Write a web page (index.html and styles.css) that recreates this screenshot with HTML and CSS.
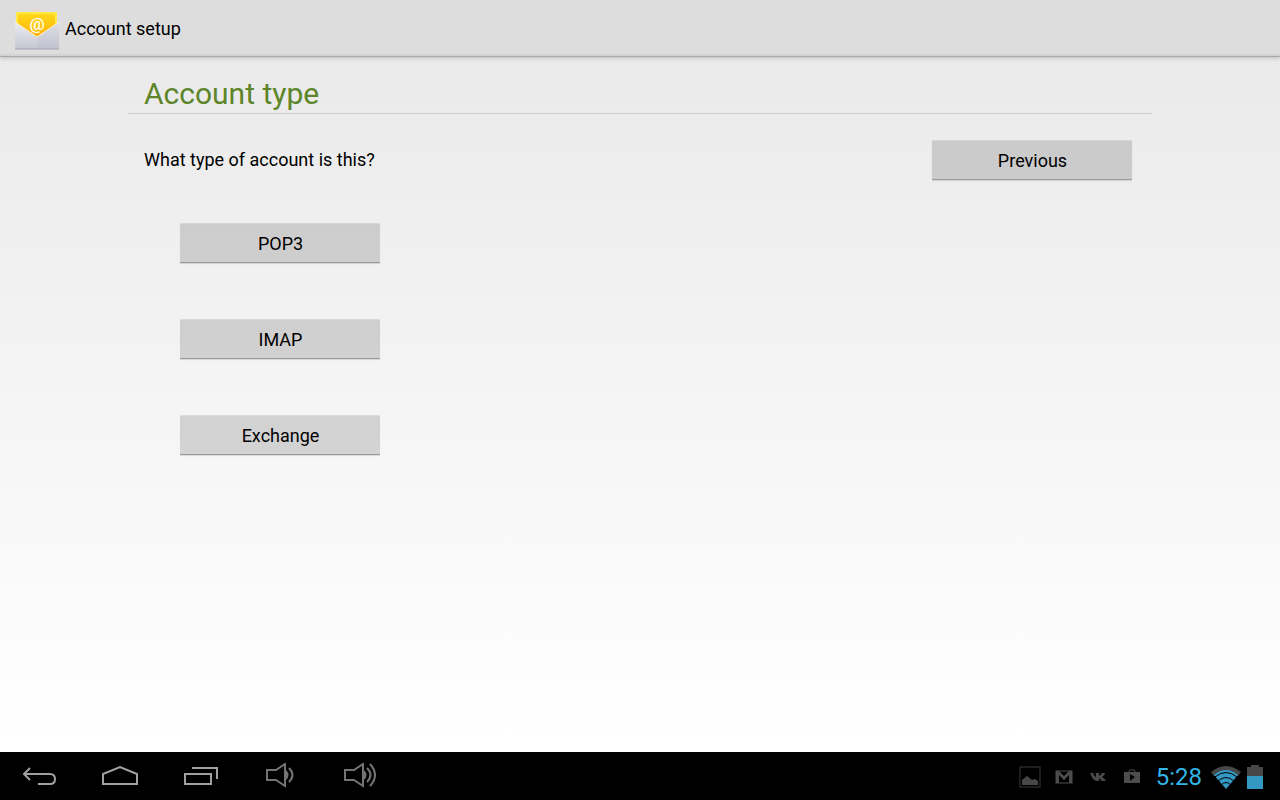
FILE: index.html
```html
<!DOCTYPE html>
<html lang="en">

<head>
    <meta charset="UTF-8" />
    <meta name="viewport" content="width=device-width, initial-scale=1" />
    <title>Account setup</title>
    <link rel="stylesheet" href="styles.css">
</head>

<body>
    <header class="action-bar">
        <svg class="app-icon" width="46" height="42" viewBox="0 0 46 42" aria-hidden="true">
            <defs>
                <linearGradient id="letter" x1="0" y1="0" x2="0" y2="1">
                    <stop offset="0" stop-color="#ffd91c" />
                    <stop offset="1" stop-color="#ffa800" />
                </linearGradient>
                <linearGradient id="envelope" x1="0" y1="0" x2="0" y2="1">
                    <stop offset="0" stop-color="#ececf1" />
                    <stop offset="1" stop-color="#c6c6d2" />
                </linearGradient>
            </defs>
            <path d="M1 15 L21 1 Q23 -1 25 1 L45 15 Z" fill="#e9d8d2" />
            <rect x="3" y="5" width="39" height="30" fill="url(#letter)" />
            <path d="M3 20 V5 H42 V20" fill="none" stroke="#ffe945" stroke-width="2" />
            <path d="M1 14 L23 29 L45 14 V41 H1 Z" fill="url(#envelope)" />
            <path d="M23 29 L45 14 V41 H23 Z" fill="#b9b9c8" opacity=".25" />
            <path d="M1 14 L23 29 L45 14" fill="none" stroke="#fff3cf" stroke-width="1" />
            <path d="M1 41 H45" stroke="#a3a3b2" stroke-width="1" />
            <text class="app-icon-at" x="23" y="22" text-anchor="middle">@</text>
        </svg>
        <span class="app-title">Account setup</span>
    </header>

    <main class="setup">
        <h1>Account type</h1>

        <div class="question">
            <p>What type of account is this?</p>
            <button type="button" class="btn">Previous</button>
        </div>

        <div class="account-types">
            <button type="button" class="btn">POP3</button>
            <button type="button" class="btn">IMAP</button>
            <button type="button" class="btn">Exchange</button>
        </div>
    </main>

    <footer class="system-bar">
        <nav class="nav-keys">
            <button type="button" aria-label="Back">
                <svg width="36" height="28" viewBox="0 0 36 28" fill="none" stroke="#a0a0a0" stroke-width="2">
                    <path d="M8 5 L2 11 L8 17 M2 11 H28 Q33 11 33 16 Q33 21 28 21 H16" />
                </svg>
            </button>
            <button type="button" aria-label="Home">
                <svg width="38" height="28" viewBox="0 0 38 28" fill="none" stroke="#a0a0a0" stroke-width="2">
                    <path d="M2 21 V11 L19 4 L36 11 V21 Z" />
                </svg>
            </button>
            <button type="button" aria-label="Recent apps">
                <svg width="36" height="28" viewBox="0 0 36 28" fill="none" stroke="#a0a0a0" stroke-width="2">
                    <rect x="3" y="11" width="26" height="10" />
                    <path d="M10 5 H35 V16" />
                </svg>
            </button>
            <button type="button" aria-label="Volume down">
                <svg width="30" height="28" viewBox="0 0 30 28" fill="none" stroke="#747474" stroke-width="2">
                    <path d="M2 7 H11 L20 1 V23 L11 17 H2 Z" />
                    <path d="M21 7 Q26 12 21 17 Z" fill="#747474" stroke="none" />
                    <path d="M24 5 Q31 12 24 19" />
                </svg>
            </button>
            <button type="button" aria-label="Volume up">
                <svg width="34" height="28" viewBox="0 0 34 28" fill="none" stroke="#747474" stroke-width="2">
                    <path d="M2 7 H11 L20 1 V23 L11 17 H2 Z" />
                    <path d="M21 7 Q26 12 21 17 Z" fill="#747474" stroke="none" />
                    <path d="M24 5 Q31 12 24 19 M27 1 Q37 12 27 23" />
                </svg>
            </button>
        </nav>

        <div class="status">
            <div class="notifications">
                <!-- screenshot -->
                <svg width="22" height="22" viewBox="0 0 22 22">
                    <rect x="1" y="1" width="20" height="20" fill="none" stroke="#3b3b3b" stroke-width="1" />
                    <path d="M3 19 V14 L8 10 L13 14 L16 13 L19 15 V19 Z" fill="#474747" />
                </svg>
                <!-- mail -->
                <svg width="18" height="14" viewBox="0 0 18 14">
                    <rect x="1" y="1" width="16" height="12" fill="none" stroke="#4d4d4d" stroke-width="1" />
                    <path d="M1 13 V1 H4 L9 6 L14 1 H17 V13 H14 V5 L9 10 L4 5 V13 Z" fill="#4d4d4d" />
                </svg>
                <!-- vk -->
                <svg width="16" height="10" viewBox="0 0 16 10">
                    <path d="M0 1 H3 Q4 4 6 5 V2 L5 1 H9 V4 Q11 3 12 1 H15 Q15 3 12 5 Q14 6 16 9 H12 L9 6 V9 H7 Q3 9 0 1 Z" fill="#4a4a4a" />
                </svg>
                <!-- play store -->
                <svg width="16" height="16" viewBox="0 0 16 16">
                    <path d="M5 4 V2 Q5 1 6 1 H10 Q11 1 11 2 V4" fill="none" stroke="#4d4d4d" stroke-width="1" />
                    <path d="M0 3 H16 V13 Q16 14 15 14 H1 Q0 14 0 13 Z M6 5 V12 L11 8 Z" fill="#4d4d4d" fill-rule="evenodd" />
                </svg>
            </div>
            <time class="clock">5:28</time>
            <svg class="wifi" width="30" height="24" viewBox="0 0 30 24" aria-label="Wi-Fi">
                <path d="M0 7 Q15 -5 30 7 L27 11 Q15 1 3 11 Z" fill="#474747" />
                <path d="M15 24 L3 10 Q15 0 27 10 Z" fill="#3499c2" />
                <path d="M4 12 Q15 3 26 12 M7 16 Q15 9 23 16 M10 20 Q15 15 20 20" fill="none" stroke="#000" stroke-width="1" />
            </svg>
            <svg class="battery" width="16" height="24" viewBox="0 0 16 24" aria-label="Battery">
                <path d="M0 2 H4 V0 H12 V2 H16 V11 H0 Z" fill="#474747" />
                <rect y="11" width="16" height="13" fill="#3499c2" />
            </svg>
        </div>
    </footer>
</body>

</html>
```

FILE: styles.css
```css
* {
    box-sizing: border-box;
}

body {
    margin: 0;
    min-height: 100vh;
    display: flex;
    flex-direction: column;
    font-family: Roboto, sans-serif;
    font-size: 18px;
    line-height: 24px;
    color: #000;
    background: linear-gradient(#e8e8e8, #fff 92%);
}

button {
    font: inherit;
    color: inherit;
    border: none;
    padding: 0;
    cursor: pointer;
}

/* Top bar */
.action-bar {
    display: flex;
    align-items: center;
    gap: 5px;
    height: 57px;
    padding: 2px 14px 0;
    background: #ddd;
    border-bottom: 1px solid #a9a9a9;
    box-shadow: 0 1px 4px rgba(0, 0, 0, 0.2), inset 0 -2px 0 #d3d3d3;
}

.app-icon-at {
    font-size: 17px;
    font-weight: 700;
    fill: #fffbe0;
}

/* Content */
.setup {
    flex: 1;
    width: 80%;
    margin: 0 auto;
    padding-top: 18px;
}

h1 {
    margin: 0;
    padding: 0 16px;
    font-size: 30px;
    font-weight: 400;
    line-height: 38px;
    color: #5d8529;
    border-bottom: 1px solid #c9cbc9;
}

.question {
    display: flex;
    justify-content: space-between;
    align-items: center;
    padding: 26px 20px 0 16px;
}

.question p {
    margin: 0;
}

.account-types {
    display: flex;
    flex-direction: column;
    align-items: flex-start;
    gap: 56px;
    padding: 43px 52px;
}

.btn {
    width: 200px;
    height: 40px;
    padding: 1px 0 0 1px;
    background: rgba(0, 0, 0, 0.14);
    border-radius: 1px;
    box-shadow: inset 0 -1px 0 #999, inset 0 1px 0 rgba(255, 255, 255, 0.2), 0 1px 1px rgba(0, 0, 0, 0.12);
}

.btn:active {
    background: rgba(0, 0, 0, 0.25);
}

/* Bottom bar */
.system-bar {
    display: flex;
    justify-content: space-between;
    height: 48px;
    background: #000;
}

.nav-keys {
    display: flex;
    padding-top: 2px;
}

.nav-keys button {
    display: flex;
    align-items: center;
    justify-content: center;
    width: 80px;
    background: none;
}

.status {
    display: flex;
    align-items: center;
    padding: 2px 17px 0 0;
}

.notifications {
    display: flex;
    align-items: center;
}

.notifications svg {
    width: 34px;
}

.clock {
    margin: 0 9px 0 7px;
    font-size: 24px;
    line-height: 28px;
    color: #33b5e5;
}

.battery {
    margin-left: 6px;
}
```
